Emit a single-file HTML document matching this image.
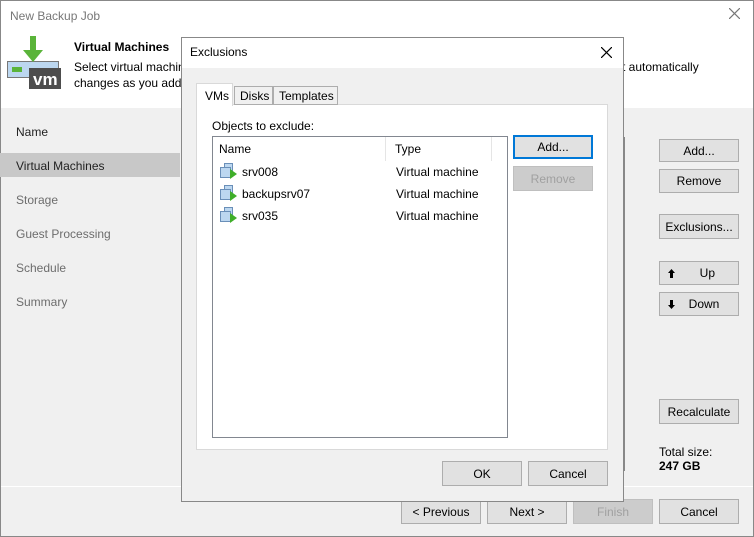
<!DOCTYPE html><html><head><style>
*{box-sizing:border-box;margin:0;padding:0}
body{width:754px;height:537px;position:relative;overflow:hidden;font-family:"Liberation Sans",sans-serif;font-size:12px;color:#000;background:#f0f0f0}
.a{position:absolute}
.btn{position:absolute;background:#e1e1e1;border:1px solid #adadad;text-align:center;font-size:12px;display:flex;align-items:center;justify-content:center}
.dis{color:#a0a0a0;background:#cccccc;border-color:#bfbfbf}
.nav{position:absolute;left:16px;font-size:12px;color:#6d6d6d}
</style></head><body>
<div class="a" style="left:0;top:0;width:754px;height:537px;border:1px solid #888"></div>
<div class="a" style="left:1px;top:1px;width:752px;height:107px;background:#fff"></div>
<div class="a" style="left:10px;top:9px;color:#777;font-size:12px">New Backup Job</div>
<svg class="a" style="left:729px;top:8px" width="11" height="11"><path d="M0 0L11 11M11 0L0 11" stroke="#777" stroke-width="1.2"/></svg>
<svg class="a" style="left:7px;top:36px" width="54" height="54"><rect x="0.5" y="25.5" width="51" height="16" fill="#bcd7f0" stroke="#777"/><rect x="5" y="31" width="10" height="5" fill="#5ab43a"/><rect x="22" y="32" width="32" height="21" fill="#4d4d4d"/><text x="26" y="49" fill="#fff" font-size="17" font-weight="bold" font-family="Liberation Sans">vm</text><path d="M23 0h6v14h7l-10 12-10-12h7z" fill="#5ab43a"/></svg>
<div class="a" style="left:74px;top:40px;font-weight:bold;font-size:12px">Virtual Machines</div>
<div class="a" style="left:74px;top:60px">Select virtual machin</div>
<div class="a" style="left:74px;top:76px">changes as you add</div>
<div class="a" style="left:622px;top:60px">t automatically</div>
<div class="a" style="left:0;top:153px;width:180px;height:24px;background:#c8c8c8"></div>
<div class="nav" style="top:125px;color:#222">Name</div>
<div class="nav" style="top:159px;color:#222">Virtual Machines</div>
<div class="nav" style="top:193px">Storage</div>
<div class="nav" style="top:227px">Guest Processing</div>
<div class="nav" style="top:261px">Schedule</div>
<div class="nav" style="top:295px">Summary</div>
<div class="a" style="left:560px;top:137px;width:65px;height:334px;background:#fff;border:1px solid #888"></div>
<div class="btn" style="left:659px;top:139px;width:80px;height:23px">Add...</div>
<div class="btn" style="left:659px;top:169px;width:80px;height:24px">Remove</div>
<div class="btn" style="left:659px;top:214px;width:80px;height:25px">Exclusions...</div>
<div class="btn" style="left:659px;top:261px;width:80px;height:24px">&nbsp;&nbsp;&nbsp;&nbsp;&nbsp;Up<svg class="a" style="left:8px;top:7px" width="7" height="9"><path d="M3.5 0L7 4H5v5H2V4H0z" fill="#000"/></svg></div>
<div class="btn" style="left:659px;top:292px;width:80px;height:24px">&nbsp;&nbsp;&nbsp;Down<svg class="a" style="left:8px;top:7px" width="7" height="9"><path d="M3.5 9L7 5H5V0H2v5H0z" fill="#000"/></svg></div>
<div class="btn" style="left:659px;top:399px;width:80px;height:25px">Recalculate</div>
<div class="a" style="left:659px;top:445px">Total size:</div>
<div class="a" style="left:659px;top:459px;font-weight:bold">247 GB</div>
<div class="a" style="left:1px;top:486px;width:752px;height:1px;background:#fff"></div>
<div class="btn" style="left:401px;top:499px;width:80px;height:25px">&lt; Previous</div>
<div class="btn" style="left:487px;top:499px;width:80px;height:25px">Next &gt;</div>
<div class="btn dis" style="left:573px;top:499px;width:80px;height:25px">Finish</div>
<div class="btn" style="left:659px;top:499px;width:80px;height:25px">Cancel</div>

<div class="a" style="left:181px;top:37px;width:443px;height:465px;background:#f0f0f0;border:1px solid #888"></div>
<div class="a" style="left:182px;top:38px;width:441px;height:30px;background:#fff"></div>
<div class="a" style="left:190px;top:45px;font-size:12px">Exclusions</div>
<svg class="a" style="left:601px;top:47px" width="11" height="11"><path d="M0 0L11 11M11 0L0 11" stroke="#000" stroke-width="1.2"/></svg>
<div class="a" style="left:196px;top:104px;width:412px;height:346px;background:#fff;border:1px solid #d9d9d9"></div>
<div class="a" style="left:196px;top:83px;width:37px;height:23px;background:#fff;border:1px solid #d9d9d9;border-bottom:none;padding:5px 0 0 8px">VMs</div>
<div class="a" style="left:234px;top:86px;width:39px;height:19px;background:#f0f0f0;border:1px solid #adadad;padding:2px 0 0 5px">Disks</div>
<div class="a" style="left:273px;top:86px;width:65px;height:19px;background:#f0f0f0;border:1px solid #adadad;padding:2px 0 0 5px">Templates</div>
<div class="a" style="left:212px;top:119px">Objects to exclude:</div>
<div class="a" style="left:212px;top:136px;width:296px;height:302px;background:#fff;border:1px solid #828790"></div>
<div class="a" style="left:385px;top:137px;width:1px;height:24px;background:#e5e5e5"></div>
<div class="a" style="left:491px;top:137px;width:1px;height:24px;background:#e5e5e5"></div>
<div class="a" style="left:219px;top:142px">Name</div>
<div class="a" style="left:395px;top:142px">Type</div>
<svg width="0" height="0"><defs><g id="ic"><rect x="4.5" y="0.5" width="8" height="7" fill="#bcd7f0" stroke="#6a8fb8"/><rect x="0.5" y="4.5" width="10" height="10" fill="#bcd7f0" stroke="#6a8fb8"/><path d="M10 6l7 5-7 5z" fill="#3fae29"/></g></defs></svg>
<svg class="a" style="left:220px;top:163px" width="18" height="17"><use href="#ic"/></svg>
<svg class="a" style="left:220px;top:185px" width="18" height="17"><use href="#ic"/></svg>
<svg class="a" style="left:220px;top:207px" width="18" height="17"><use href="#ic"/></svg>
<div class="a" style="left:242px;top:165px">srv008</div><div class="a" style="left:396px;top:165px">Virtual machine</div>
<div class="a" style="left:242px;top:187px">backupsrv07</div><div class="a" style="left:396px;top:187px">Virtual machine</div>
<div class="a" style="left:242px;top:209px">srv035</div><div class="a" style="left:396px;top:209px">Virtual machine</div>
<div class="btn" style="left:513px;top:135px;width:80px;height:24px;border:2px solid #0078d7">Add...</div>
<div class="btn dis" style="left:513px;top:166px;width:80px;height:25px">Remove</div>
<div class="btn" style="left:442px;top:461px;width:80px;height:25px">OK</div>
<div class="btn" style="left:528px;top:461px;width:80px;height:25px">Cancel</div>
</body></html>
